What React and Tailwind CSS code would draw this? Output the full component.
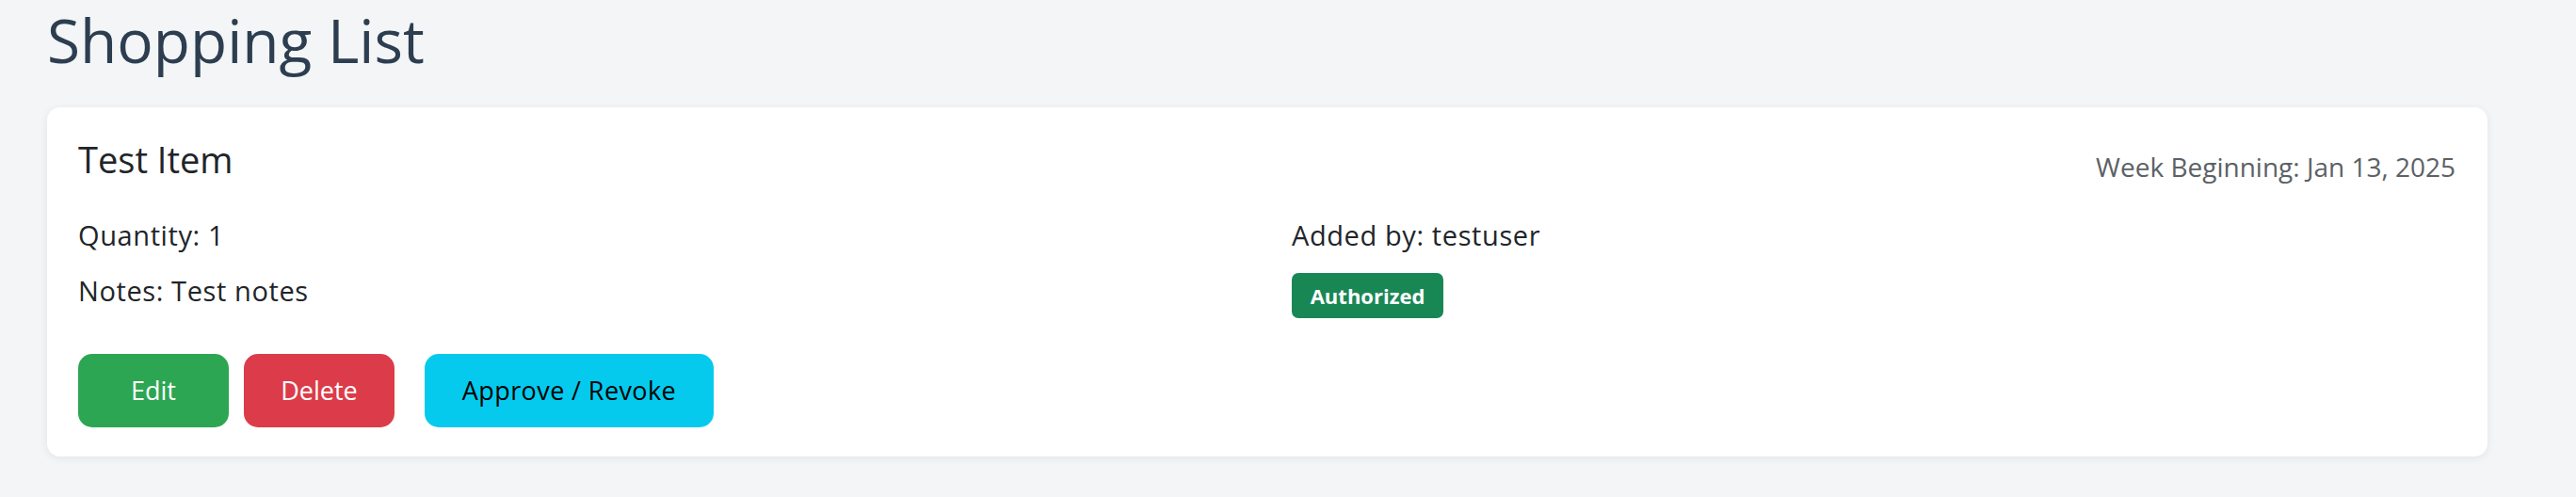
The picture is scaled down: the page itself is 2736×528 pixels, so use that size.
import React from 'react'

const font = { fontFamily: '"Open Sans", "Noto Sans", sans-serif' }

function ItemCard({ item }) {
    return (
        <div className="mt-[34px] mr-[94px] bg-white rounded-[14px] shadow-[0_2px_10px_rgba(0,0,0,0.07)] pl-[33px] pr-[34px] pt-[32px] pb-[31px]">
            {/* header */}
            <div className="flex justify-between items-start">
                <h5 className="mt-[4px] text-[38px] leading-[38px] text-[#212529]">{item.name}</h5>
                <span className="mt-[17px] text-[28px] leading-[28px] text-[#5c6166]">Week Beginning: {item.week}</span>
            </div>

            <div className="grid grid-cols-2 gap-x-[53px] mt-[45px] text-[29px] leading-[28px] tracking-[0.6px] text-[#212529]">
                <div className="flex flex-col">
                    <p>Quantity: {item.quantity}</p>
                    <p className="mt-[31px]">Notes: {item.notes}</p>
                </div>
                <div className="flex flex-col items-start">
                    <p>Added by: {item.addedBy}</p>
                    <span className="mt-[26px] w-[161px] h-[48px] rounded-[7px] bg-[#198754] text-white text-[22px] leading-none tracking-normal font-bold flex items-center justify-center">
                        {item.authorized ? 'Authorized' : 'Pending'}
                    </span>
                </div>
            </div>

            {/* actions */}
            <div className="flex items-center mt-[38px] text-[27px] font-medium">
                <button className="w-[160px] h-[78px] rounded-[15px] bg-[#2ca652] text-white">Edit</button>
                <button className="ml-[16px] w-[160px] h-[78px] rounded-[15px] bg-[#dc3c4a] text-white">Delete</button>
                <button className="ml-[32px] w-[307px] h-[78px] rounded-[15px] bg-[#05caed] text-black tracking-[0.4px]">Approve / Revoke</button>
            </div>
        </div>
    )
}

export default function App() {
    const item = {
        name: 'Test Item',
        week: 'Jan 13, 2025',
        quantity: 1,
        notes: 'Test notes',
        addedBy: 'testuser',
        authorized: true,
    }

    return (
        <div className="min-h-[528px] bg-[#f4f5f7] pl-[50px]" style={font}>
            <h1 className="pt-[6px] text-[64px] leading-[74px] text-[#2c3e50]">Shopping List</h1>
            <ItemCard item={item} />
        </div>
    )
}
